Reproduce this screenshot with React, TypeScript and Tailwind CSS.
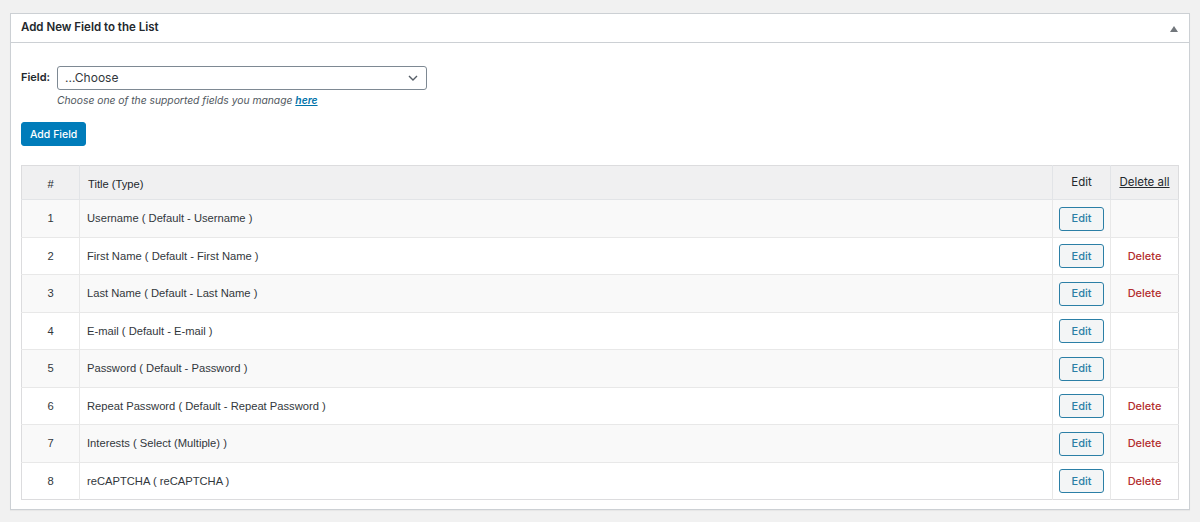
import React from "react";

const rows = [
  { n: 1, t: "Username ( Default - Username )", del: false },
  { n: 2, t: "First Name ( Default - First Name )", del: true },
  { n: 3, t: "Last Name ( Default - Last Name )", del: true },
  { n: 4, t: "E-mail ( Default - E-mail )", del: false },
  { n: 5, t: "Password ( Default - Password )", del: false },
  { n: 6, t: "Repeat Password ( Default - Repeat Password )", del: true },
  { n: 7, t: "Interests ( Select (Multiple) )", del: true },
  { n: 8, t: "reCAPTCHA ( reCAPTCHA )", del: true },
];

export default function App() {
  return (
    <div className="w-[1200px] h-[522px] bg-[#f1f1f1] pt-[13px] pl-[10px] pr-[10px] font-['Inter','Liberation_Sans',sans-serif] text-[13px] text-[#23282d]">
      <div className="bg-white border border-[#ccd0d4] shadow-[0_1px_1px_rgba(0,0,0,0.04)] w-[1180px]">
        <div className="h-[29px] flex items-center justify-between border-b border-[#ccd0d4] pl-[10px] pr-[11px]">
          <span className="text-[11.5px] font-semibold text-[#23282d]">Add New Field to the List</span>
          <svg width="8" height="6" viewBox="0 0 8 6" className="mt-[2px]">
            <polygon points="4,0 8,6 0,6" fill="#72777c" />
          </svg>
        </div>
        <div className="pl-[10px] pr-[10px] pt-[23px] pb-[9px]">
          <div className="flex items-start">
            <label className="w-[36px] font-semibold text-[11px] pt-[3px] text-[#23282d]">Field:</label>
            <div className="flex flex-col">
              <div className="w-[370px] h-[24px] border border-[#7e8993] rounded-[3px] flex items-center justify-between pl-[7px] pr-[8px] text-[12px] text-[#32373c]">
                <span>...Choose</span>
                <svg width="10" height="6" viewBox="0 0 10 6">
                  <path d="M1 1 L5 5 L9 1" stroke="#555d66" strokeWidth="1.4" fill="none" />
                </svg>
              </div>
              <p className="italic text-[10.3px] text-[#50575e] mt-[3px]">
                Choose one of the supported fields you manage <a className="text-[#0073aa] underline font-semibold">here</a>
              </p>
            </div>
          </div>
          <button className="mt-[14px] h-[24px] px-[8px] bg-[#007cba] border border-[#007cba] rounded-[3px] text-white text-[10.5px] font-medium">
            Add Field
          </button>
          <table className="mt-[19px] w-[1158px] border border-[#dcdcde] border-collapse text-[11.2px] text-[#32373c] font-['Liberation_Sans',sans-serif]">
            <thead>
              <tr className="bg-[#f0f0f1] h-[34px] text-[#23282d]">
                <th className="w-[58px] font-normal border-r border-b border-[#e2e4e7] text-center pt-[2px]">#</th>
                <th className="font-normal text-left pl-[8px] border-r border-b border-[#e2e4e7] pt-[2px]">Title (Type)</th>
                <th className="w-[58px] font-normal text-[11.5px] border-r border-b border-[#e2e4e7] text-center font-['Inter',sans-serif]">Edit</th>
                <th className="w-[68px] font-normal text-[11.5px] border-b border-[#e2e4e7] text-center font-['Inter',sans-serif]">
                  <span className="underline">Delete all</span>
                </th>
              </tr>
            </thead>
            <tbody>
              {rows.map((r, i) => (
                <tr key={r.n} className={(i % 2 === 0 ? "bg-[#f9f9f9]" : "bg-white") + " h-[37.5px]"}>
                  <td className={"text-center border-r border-[#e8e8e8] " + (i < rows.length - 1 ? "border-b" : "")}>{r.n}</td>
                  <td className={"pl-[7px] border-r border-[#e8e8e8] " + (i < rows.length - 1 ? "border-b" : "")}>{r.t}</td>
                  <td className={"text-center border-r border-[#e8e8e8] " + (i < rows.length - 1 ? "border-b" : "")}>
                    <button className="w-[45px] h-[24px] border border-[#2b7fa6] rounded-[3px] bg-[#f3f5f6] text-[#2b7fa6] text-[11px] font-medium font-['Inter',sans-serif]">
                      Edit
                    </button>
                  </td>
                  <td className={"text-center border-[#e8e8e8] " + (i < rows.length - 1 ? "border-b" : "")}>
                    {r.del ? <span className="text-[#b32d2e] text-[11px] font-medium font-['Inter',sans-serif]">Delete</span> : null}
                  </td>
                </tr>
              ))}
            </tbody>
          </table>
        </div>
      </div>
    </div>
  );
}
